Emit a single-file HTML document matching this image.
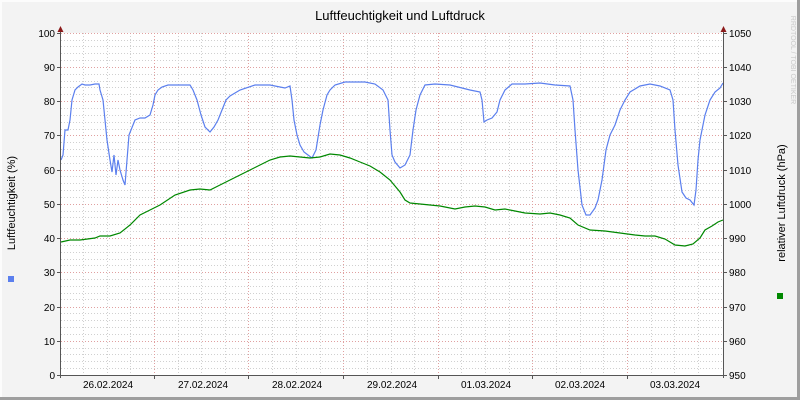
<!DOCTYPE html>
<html><head><meta charset="utf-8"><style>
html,body{margin:0;padding:0;width:800px;height:400px;overflow:hidden;background:#f3f3f3}
svg{display:block}
text{font-family:"Liberation Sans","DejaVu Sans",sans-serif;}
</style></head><body>
<svg width="800" height="400" viewBox="0 0 800 400" xmlns="http://www.w3.org/2000/svg">
<rect x="0" y="0" width="800" height="400" fill="#f3f3f3"/>
<rect x="0" y="0" width="800" height="2" fill="#fcfcfc"/>
<rect x="0" y="0" width="2" height="400" fill="#fcfcfc"/>
<rect x="0" y="397" width="800" height="3" fill="#9e9e9e"/>
<rect x="797" y="0" width="3" height="400" fill="#9e9e9e"/>
<rect x="61" y="33" width="662" height="342" fill="#ffffff"/>
<g stroke="#d0d0d0" stroke-width="1" stroke-dasharray="1,2">
<path d="M61 368.5H723M61 361.5H723M61 354.5H723M61 348.5H723M61 334.5H723M61 327.5H723M61 320.5H723M61 313.5H723M61 299.5H723M61 293.5H723M61 286.5H723M61 279.5H723M61 265.5H723M61 259.5H723M61 252.5H723M61 245.5H723M61 231.5H723M61 224.5H723M61 217.5H723M61 211.5H723M61 197.5H723M61 190.5H723M61 183.5H723M61 176.5H723M61 163.5H723M61 156.5H723M61 149.5H723M61 142.5H723M61 129.5H723M61 122.5H723M61 115.5H723M61 108.5H723M61 94.5H723M61 87.5H723M61 81.5H723M61 74.5H723M61 60.5H723M61 53.5H723M61 46.5H723M61 40.5H723"/>
<path d="M83.5 33V375M107.5 33V375M130.5 33V375M178.5 33V375M201.5 33V375M225.5 33V375M272.5 33V375M296.5 33V375M320.5 33V375M367.5 33V375M391.5 33V375M414.5 33V375M461.5 33V375M485.5 33V375M509.5 33V375M556.5 33V375M580.5 33V375M603.5 33V375M651.5 33V375M674.5 33V375M698.5 33V375"/>
</g>
<g stroke="#e0a0a0" stroke-width="1" stroke-dasharray="1,2">
<path d="M61 341.5H723M61 307.5H723M61 272.5H723M61 238.5H723M61 204.5H723M61 170.5H723M61 135.5H723M61 101.5H723M61 67.5H723M61 33.5H723"/>
<path d="M154.5 33V375M248.5 33V375M343.5 33V375M438.5 33V375M532.5 33V375M627.5 33V375"/>
</g>
<polyline fill="none" stroke="#5b7fee" stroke-width="1.2" points="61,160 63,155 65,130 68,130 70,120 72,100 75,90 78,87 82,84 85,85 90,85 95,84 99,84 100,90 103,100 105,120 107,140 110,160 112,172 114,155 116,175 118,160 120,170 123,180 125,185 127,160 129,135 133,125 135,120 140,118 145,118 150,115 153,105 155,95 158,90 162,87 168,85 180,85 190,85 193,90 197,100 201,115 205,127 210,132 214,127 218,120 222,110 226,100 230,96 240,90 255,85 270,85 285,88 290,86 292,100 294,120 297,135 300,145 304,152 308,155 312,158 316,150 320,125 323,110 327,95 330,90 335,85 345,82 365,82 375,84 383,90 388,100 390,130 392,155 395,162 400,168 405,165 410,155 413,130 416,110 420,95 425,85 435,84 450,85 470,90 480,92 482,100 484,122 487,120 492,118 497,112 500,100 505,90 512,84 525,84 540,83 555,85 570,86 573,100 575,130 578,170 582,205 586,215 590,215 595,208 598,200 602,180 606,150 610,135 615,125 620,110 625,100 630,92 640,86 650,84 660,86 670,90 673,100 675,130 678,165 682,192 686,198 690,200 694,205 696,190 698,160 700,140 705,115 710,100 715,92 720,88 723,83"/>
<polyline fill="none" stroke="#008800" stroke-width="1.2" points="61,242 70,240 80,240 95,238 100,236 110,236 120,233 130,225 140,215 150,210 160,205 175,195 190,190 200,189 210,190 220,185 230,180 240,175 250,170 260,165 270,160 280,157 290,156 300,157 310,158 320,157 330,154 340,155 350,158 360,162 370,166 380,172 390,180 400,192 405,200 410,203 420,204 430,205 440,206 455,209 465,207 475,206 485,207 495,210 505,209 515,211 525,213 540,214 550,213 560,215 570,218 578,225 590,230 605,231 620,233 635,235 645,236 655,236 665,239 675,245 685,246 693,244 700,238 705,230 712,226 718,222 723,220"/>
<g stroke="#555" stroke-width="1">
<path d="M60.5 30V378M723.5 30V378M58 375.5H726"/>
<path d="M57 375.5H61M57 341.5H61M57 307.5H61M57 272.5H61M57 238.5H61M57 204.5H61M57 170.5H61M57 135.5H61M57 101.5H61M57 67.5H61M57 33.5H61"/>
<path d="M723 375.5H727M723 341.5H727M723 307.5H727M723 272.5H727M723 238.5H727M723 204.5H727M723 170.5H727M723 135.5H727M723 101.5H727M723 67.5H727M723 33.5H727"/>
<path d="M154.5 375V379M248.5 375V379M343.5 375V379M438.5 375V379M532.5 375V379M627.5 375V379"/>
</g>
<path d="M57.5 32L60.5 26L63.5 32Z M720.5 32L723.5 26L726.5 32Z" fill="#8b1a1a"/>
<g font-size="10" fill="#000" text-anchor="end">
<text x="55" y="379">0</text><text x="55" y="345">10</text><text x="55" y="311">20</text><text x="55" y="276">30</text><text x="55" y="242">40</text><text x="55" y="208">50</text><text x="55" y="174">60</text><text x="55" y="139">70</text><text x="55" y="105">80</text><text x="55" y="71">90</text><text x="55" y="37">100</text>
</g>
<g font-size="10" fill="#000">
<text x="729" y="379">950</text><text x="729" y="345">960</text><text x="729" y="311">970</text><text x="729" y="276">980</text><text x="729" y="242">990</text><text x="729" y="208">1000</text><text x="729" y="174">1010</text><text x="729" y="139">1020</text><text x="729" y="105">1030</text><text x="729" y="71">1040</text><text x="729" y="37">1050</text>
</g>
<g font-size="10" fill="#000" text-anchor="middle">
<text x="108" y="388">26.02.2024</text><text x="203" y="388">27.02.2024</text><text x="297" y="388">28.02.2024</text><text x="392" y="388">29.02.2024</text><text x="486" y="388">01.03.2024</text><text x="580" y="388">02.03.2024</text><text x="675" y="388">03.03.2024</text>
</g>
<text x="400" y="20" font-size="13" text-anchor="middle" fill="#000">Luftfeuchtigkeit und Luftdruck</text>
<text transform="translate(15,203) rotate(-90)" font-size="11" text-anchor="middle" fill="#000">Luftfeuchtigkeit (%)</text>
<text transform="translate(785,203) rotate(-90)" font-size="11" text-anchor="middle" fill="#000">relativer Luftdruck (hPa)</text>
<text transform="translate(791,60) rotate(90)" font-size="7" text-anchor="middle" fill="#c8c8c8">RRDTOOL / TOBI OETIKER</text>
<rect x="8" y="276" width="6" height="6" fill="#5b7fee"/>
<rect x="777" y="293" width="6" height="6" fill="#008800"/>
</svg>
</body></html>
